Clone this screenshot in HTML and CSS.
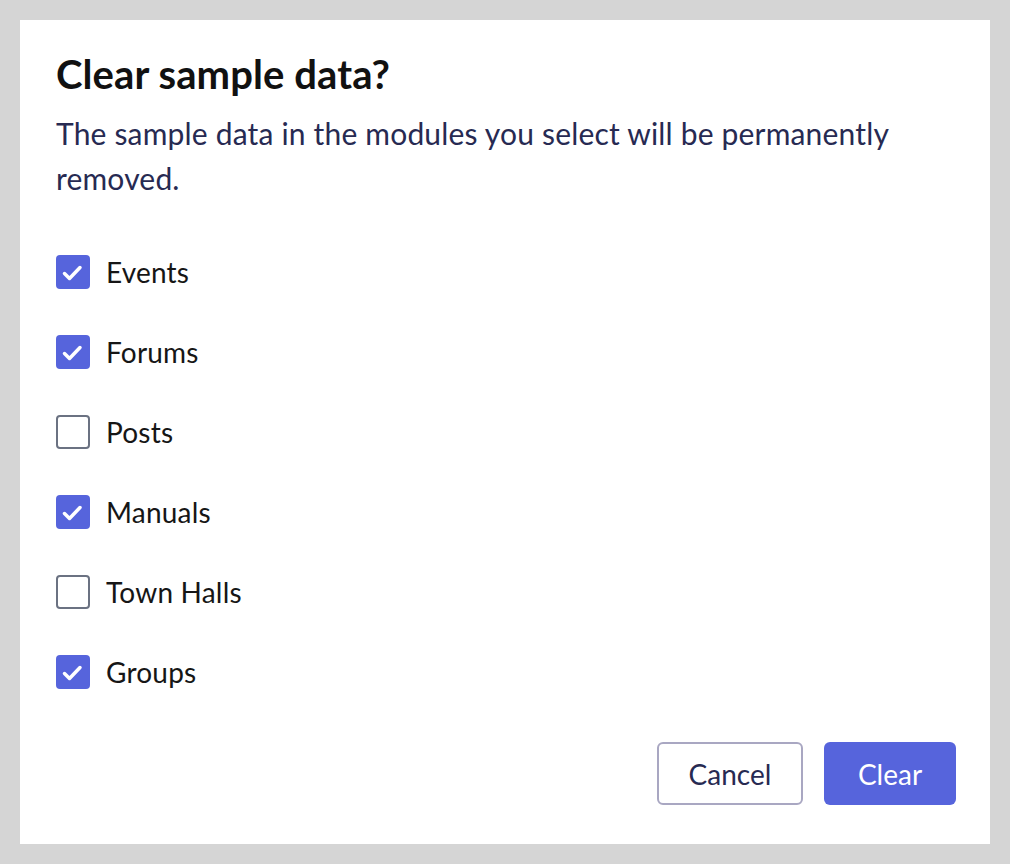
FILE: index.html
```html
<!DOCTYPE html>
<html lang="en">
<head>
    <meta charset="UTF-8">
    <meta name="viewport" content="width=device-width, initial-scale=1.0">
    <title>Clear sample data</title>
    <link rel="stylesheet" href="styles.css">
</head>
<body>
    <!-- Diálogo para borrar datos de ejemplo -->
    <div class="dialogo">
        <h1 class="titulo">Clear sample data?</h1>
        <p class="descripcion">The sample data in the modules you select will be permanently removed.</p>

        <ul class="modulos">
            <li class="modulo">
                <span class="casilla marcada">
                    <svg viewBox="0 0 34 34"><polyline points="8.5,18.5 13.5,23.5 24,12.5"/></svg>
                </span>
                Events
            </li>
            <li class="modulo">
                <span class="casilla marcada">
                    <svg viewBox="0 0 34 34"><polyline points="8.5,18.5 13.5,23.5 24,12.5"/></svg>
                </span>
                Forums
            </li>
            <li class="modulo">
                <span class="casilla"></span>
                Posts
            </li>
            <li class="modulo">
                <span class="casilla marcada">
                    <svg viewBox="0 0 34 34"><polyline points="8.5,18.5 13.5,23.5 24,12.5"/></svg>
                </span>
                Manuals
            </li>
            <li class="modulo">
                <span class="casilla"></span>
                Town Halls
            </li>
            <li class="modulo">
                <span class="casilla marcada">
                    <svg viewBox="0 0 34 34"><polyline points="8.5,18.5 13.5,23.5 24,12.5"/></svg>
                </span>
                Groups
            </li>
        </ul>

        <div class="acciones">
            <button class="boton cancelar">Cancel</button>
            <button class="boton borrar">Clear</button>
        </div>
    </div>
</body>
</html>
```

FILE: styles.css
```css
* {
    box-sizing: border-box;
    font-family: Lato, 'Noto Sans', sans-serif;
}

body {
    margin: 0;
    padding: 20px;
    height: 864px;
    background-color: #d5d5d5;
}

.dialogo {
    height: 824px;
    background-color: #ffffff;
    padding: 30px 34px 39px 36px;
    display: flex;
    flex-direction: column;
}

.titulo {
    margin: 0;
    font-size: 40px;
    line-height: 48px;
    font-weight: 700;
    letter-spacing: 0.1px;
    color: #111111;
}

.descripcion {
    margin: 13px 0 0;
    font-size: 30px;
    line-height: 45px;
    letter-spacing: 0.18px;
    color: #272a52;
}

.modulos {
    list-style: none;
    margin: 54px 0 0;
    padding: 0;
    display: flex;
    flex-direction: column;
    gap: 46px;
}

.modulo {
    display: flex;
    align-items: center;
    gap: 16px;
    height: 34px;
    font-size: 28px;
    letter-spacing: 0.2px;
    color: #161616;
}

.casilla {
    width: 34px;
    height: 34px;
    border: 2px solid #6b7282;
    border-radius: 4px;
    flex-shrink: 0;
}

.casilla.marcada {
    border: none;
    background-color: #5664dc;
}

.casilla svg {
    display: block;
    width: 34px;
    height: 34px;
}

.casilla polyline {
    fill: none;
    stroke: #ffffff;
    stroke-width: 3.5;
    stroke-linecap: round;
    stroke-linejoin: round;
}

.acciones {
    margin-top: auto;
    display: flex;
    justify-content: flex-end;
    gap: 21px;
}

.boton {
    height: 63px;
    font-size: 28px;
    border-radius: 6px;
    cursor: pointer;
}

.cancelar {
    width: 146px;
    background-color: #ffffff;
    border: 2px solid #a9a7c2;
    color: #272a52;
}

.borrar {
    width: 132px;
    background-color: #5664dc;
    border: none;
    color: #ffffff;
}
```
